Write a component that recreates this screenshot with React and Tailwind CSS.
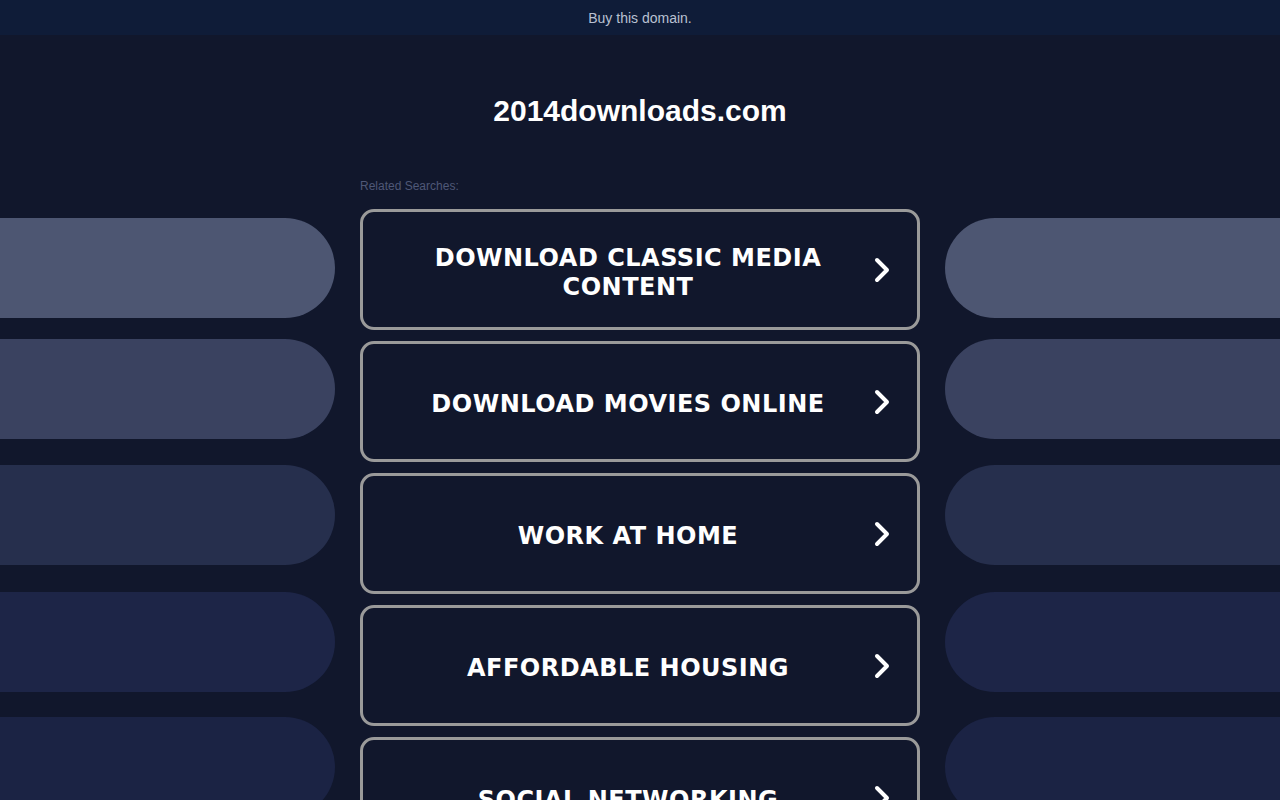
import React from "react";

const searches = [
  "DOWNLOAD CLASSIC MEDIA CONTENT",
  "DOWNLOAD MOVIES ONLINE",
  "WORK AT HOME",
  "AFFORDABLE HOUSING",
  "SOCIAL NETWORKING",
];

// decorative side pills
const pills = [
  { cls: "mt-[9px] bg-[#4d5672]" },
  { cls: "mt-[21px] bg-[#3a4260]" },
  { cls: "mt-[26px] bg-[#262f4d]" },
  { cls: "mt-[27px] bg-[#1d2547]" },
  { cls: "mt-[25px] bg-[#1b2344]" },
];

const Chevron = () => (
  <svg width="20" height="28" viewBox="0 0 20 28" fill="none">
    <path
      d="M5 4 L15 14 L5 24"
      stroke="white"
      strokeWidth="4"
      strokeLinecap="round"
      strokeLinejoin="round"
    />
  </svg>
);

const SidePills = ({ side }) => (
  <div className="flex-1 flex flex-col">
    {pills.map((p, i) => (
      <div
        key={i}
        className={`h-[100px] shrink-0 ${p.cls} ${
          side === "left" ? "rounded-r-full" : "rounded-l-full"
        }`}
      ></div>
    ))}
  </div>
);

export default function App() {
  return (
    <div
      className="min-h-screen bg-[#11172c] overflow-hidden"
      style={{ fontFamily: "'Liberation Sans', Arial, sans-serif" }}
    >
      {/* Top bar */}
      <div className="h-[35px] bg-[#0f1c38] flex items-center justify-center pt-[2px]">
        <span className="text-[14px] text-[#b9c1d2]">Buy this domain.</span>
      </div>

      {/* Domain title */}
      <h1 className="pt-[58px] text-center text-[30px] leading-[36px] font-bold text-white">
        2014downloads.com
      </h1>

      <div className="w-[560px] mx-auto mt-[50px] text-[12px] leading-[14px] text-[#4f5877]">
        Related Searches:
      </div>

      {/* Main row */}
      <div className="flex gap-[25px] mt-[16px]">
        <SidePills side="left" />

        <div className="w-[560px] shrink-0 flex flex-col gap-[11px]">
          {searches.map((s) => (
            <div
              key={s}
              className="h-[121px] shrink-0 border-[3px] border-[#9a9a9a] rounded-[14px] flex items-center pl-[40px] pr-[19px]"
            >
              <div
                className="flex-1 text-center text-white font-bold text-[24px] leading-[29px] tracking-[0.5px] pt-[6px]"
                style={{ fontFamily: "'DejaVu Sans', Verdana, sans-serif" }}
              >
                {s}
              </div>
              <div className="ml-[13px] w-[32px] flex justify-center">
                <Chevron />
              </div>
            </div>
          ))}
        </div>

        <SidePills side="right" />
      </div>
    </div>
  );
}
